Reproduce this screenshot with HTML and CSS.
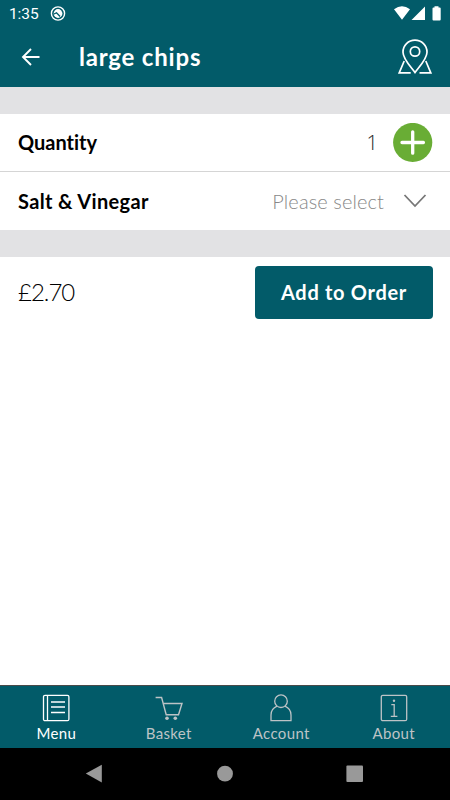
FILE: index.html
```html
<!DOCTYPE html>
<html lang="en">
<head>
<meta charset="utf-8">
<title>large chips</title>
<link rel="stylesheet" href="styles.css">
</head>
<body>
<div class="screen">
  <header class="header">
    <div class="status">
      <span class="clock">1:35</span>
      <svg class="status-app" width="16" height="16" viewBox="0 0 16 16"><circle cx="8" cy="7.500" r="6.600" fill="none" stroke="#fff" stroke-width="1.400"/><circle cx="8" cy="7.500" r="4.400" fill="#fff"/><path d="M3.500 8.300l3-1.600 3.600 3.800" fill="none" stroke="#025b69" stroke-width="1.300"/></svg>
      <svg class="status-icons" width="50" height="16" viewBox="0 0 50 16"><path d="M1 3.300Q9 -2.700 17 3.300L9 13.700zM18.500 14L32 .5v13.500zM41.500 .2h4V1.400h1.200q1 0 1 1v11.100q0 1-1 1h-6.200q-1 0-1-1V2.400q0-1 1-1h1z" fill="#fff"/></svg>
    </div>
    <div class="titlebar">
      <svg class="back" width="20" height="20" viewBox="0 0 20 20"><path d="M18.500 10H2M10 2L2 10l8 8" fill="none" stroke="#fff" stroke-width="1.900"/></svg>
      <h1 class="title">large chips</h1>
      <svg class="map" width="34" height="36" viewBox="0 0 34 36"><g fill="none" stroke="#fff" stroke-width="1.700"><path d="M17 33.500C13 28 5 20 5 13.200a12 12 0 0 1 24 0C29 20 21 28 17 33.500z"/><circle cx="17" cy="12.500" r="4.700"/><path d="M6.200 22L1.200 33.800h11.500M27.800 22l5 11.800H21.500"/></g></svg>
    </div>
  </header>
  <main class="content">
    <div class="band"></div>
    <div class="row row-quantity">
      <span class="label quantity-label">Quantity</span>
      <span class="count">1</span>
      <svg class="plus" width="40" height="40" viewBox="0 0 40 40"><circle cx="19.700" cy="19.500" r="19.600" fill="#69ad35"/><path d="M19.700 8.800v21.400M9 19.500h21.400" stroke="#fff" stroke-width="3.300" stroke-linecap="round"/></svg>
    </div>
    <div class="row row-option">
      <span class="label option-label">Salt &amp; Vinegar</span>
      <span class="select">Please select</span>
      <svg class="chevron" width="24" height="14" viewBox="0 0 24 14"><path d="M1.500 1L12 12 22.500 1" fill="none" stroke="#777" stroke-width="1.800"/></svg>
    </div>
    <div class="band"></div>
    <div class="order">
      <span class="price">£2.70</span>
      <button class="add"><span class="add-text">Add to Order</span></button>
    </div>
  </main>
  <nav class="tabs">
    <div class="tab tab-active">
      <svg width="28" height="28" viewBox="0 0 28 28"><g fill="none" stroke="currentColor" stroke-width="1.300"><rect x="1.500" y="1.300" width="25.400" height="25.400" rx="1.500"/><path d="M5.500 1v26M9 8h14M9 13h14M9 18.500h14"/></g></svg>
      <span class="tab-text">Menu</span>
    </div>
    <div class="tab">
      <svg width="28" height="28" viewBox="0 0 28 28"><path d="M.6 3.500h6l4.600 17.300h12.300L27 9.500H8.400" fill="none" stroke="currentColor" stroke-width="1.400"/><circle cx="12" cy="24.300" r="1.800" fill="currentColor"/><circle cx="20.300" cy="24.300" r="1.800" fill="currentColor"/></svg>
      <span class="tab-text">Basket</span>
    </div>
    <div class="tab">
      <svg width="28" height="28" viewBox="0 0 28 28"><g fill="none" stroke="currentColor" stroke-width="1.300"><circle cx="14" cy="7.200" r="6.300"/><path d="M10 12.200Q4 14.800 4 21v5.700h20V21Q24 14.800 18 12.200"/></g></svg>
      <span class="tab-text">Account</span>
    </div>
    <div class="tab">
      <svg width="28" height="28" viewBox="0 0 28 28"><g fill="none" stroke="currentColor" stroke-width="1.300"><rect x="1.300" y="1.300" width="25.400" height="25.400" rx="1.500"/><path d="M11.300 10.700h2.900v11.600M10.800 22.300h6.600"/></g><circle cx="14" cy="6.700" r="1.200" fill="currentColor"/></svg>
      <span class="tab-text">About</span>
    </div>
  </nav>
  <div class="system">
    <svg width="18" height="20" viewBox="0 0 18 20"><path d="M.8 9.500L16.800.7v17.900z" fill="#999"/></svg>
    <svg width="18" height="20" viewBox="0 0 18 20"><circle cx="9" cy="9.700" r="7.900" fill="#999"/></svg>
    <svg width="18" height="20" viewBox="0 0 18 20"><rect x=".4" y="1.500" width="16.600" height="16.600" rx="1" fill="#999"/></svg>
  </div>
</div>
</body>
</html>
```
FILE: styles.css
```css
* { box-sizing: border-box; }
body { margin: 0; background: #fff; font-family: Lato, sans-serif; color: #000; font-variant-ligatures: none; }
svg { display: block; flex: none; }
span, h1 { white-space: nowrap; }
.screen { width: 450px; height: 800px; display: flex; flex-direction: column; overflow: hidden; }
.header { height: 87px; flex: none; background: #025b69; color: #fff; }
.status { height: 27px; display: flex; align-items: center; padding: 0 8px 0 9px; }
.clock { font: 400 15.5px/28px Roboto, sans-serif; width: 41px; letter-spacing: -.1px; }
.status-icons { margin-left: auto; margin-right: -1px; }
.titlebar { height: 60px; display: flex; align-items: center; padding: 0 18px 0 21px; }
.title { margin: 0 0 0 38px; font-size: 24px; line-height: 30px; font-weight: 700; letter-spacing: .8px; }
.map { margin-left: auto; }
.band { height: 27px; background: #e2e2e4; }
.content { flex: 1; }
.row { display: flex; align-items: center; padding: 0 17px 0 18px; }
.row-quantity { height: 58px; border-bottom: 1px solid #d5d5d5; }
.row-option { height: 58px; }
.label { font-size: 20px; font-weight: 700; line-height: 26px; }
.quantity-label { padding-bottom: 1px; }
.option-label { letter-spacing: .35px; }
.count { margin-left: auto; font: 300 20px/26px "Open Sans", sans-serif; color: #222; }
.plus { margin-left: 15px; }
.select { margin-left: auto; font-size: 20px; font-weight: 300; line-height: 26px; padding-bottom: 1px; color: #888; letter-spacing: .1px; }
.chevron { margin: 0 6px 0 19px; }
.order { display: flex; align-items: center; justify-content: space-between; height: 71px; padding: 0 17px 0 18px; }
.price { font-size: 24px; font-weight: 300; letter-spacing: -1px; padding-bottom: 2px; }
.add { width: 178px; height: 53px; padding: 0 0 1px; border: 0; border-radius: 4px; background: #025b69; color: #fff; font: 700 20px/26px Lato, sans-serif; letter-spacing: .7px; }
.tabs { height: 63px; flex: none; display: flex; border-top: 1px solid #4a4a4a; background: #025b69; color: #bdc3c6; }
.tab { flex: 1; display: flex; flex-direction: column; align-items: center; padding-top: 8px; }
.tab-active { color: #fff; }
.tab-text { font-size: 15px; line-height: 20px; margin-top: 1px; letter-spacing: .35px; }
.system { height: 52px; flex: none; background: #000; display: flex; justify-content: space-between; align-items: center; padding: 0 86px 0 85px; }
```
